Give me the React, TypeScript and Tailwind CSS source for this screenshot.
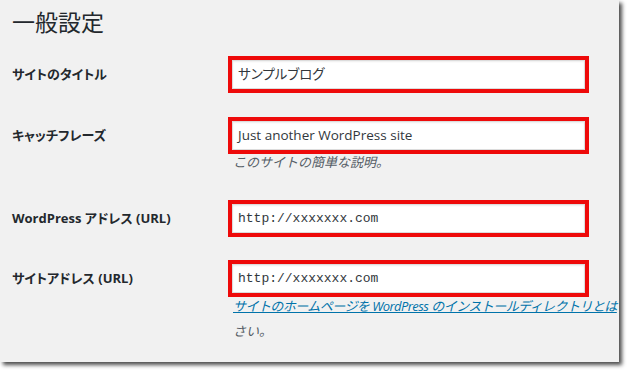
const jp = "font-['Open_Sans','Noto_Sans_CJK_JP',sans-serif] [font-feature-settings:'palt']";
const note = "font-['Open_Sans','Noto_Sans_CJK_JP',sans-serif] [font-feature-settings:normal] text-[13px] italic";

function Field({ value, mono }: { value: string; mono?: boolean }) {
  return (
    <div className="w-[361px] h-[37px] border-4 border-[#ee0a0a]">
      <div
        className={
          "h-full bg-white border border-[#dcdcdc] shadow-[inset_0_1px_2px_rgba(0,0,0,0.07)] pl-[5px] flex items-center text-[#32373c] " +
          (mono ? "font-['Liberation_Mono',monospace] text-[13px]" : jp + " text-[13.5px]")
        }
      >
        {value}
      </div>
    </div>
  );
}

function Label({ children }: { children: React.ReactNode }) {
  return (
    <div className={"w-[216px] shrink-0 h-[37px] flex items-center text-[13px] font-bold text-[#23282d] " + jp}>
      {children}
    </div>
  );
}

export default function App() {
  return (
    <div className="w-[627px] h-[370px] bg-white">
      <div className={"w-[619px] h-[362px] bg-[#f1f1f1] shadow-[3px_3px_4px_rgba(0,0,0,0.7)] overflow-hidden pl-[12px] pt-[8px] " + jp}>
        <h1 className="text-[23px] leading-[29px] font-normal text-[#23282d]">一般設定</h1>

        <div className="mt-[19px] flex">
          <Label>サイトのタイトル</Label>
          <Field value="サンプルブログ" />
        </div>

        <div className="mt-[24px] flex">
          <Label>キャッチフレーズ</Label>
          <div>
            <Field value="Just another WordPress site" />
            <p className={"pl-[5px] leading-[17px] text-[#555d66] " + note}>このサイトの簡単な説明。</p>
          </div>
        </div>

        <div className="mt-[29px] flex">
          <Label>WordPress アドレス (URL)</Label>
          <Field value="http://xxxxxxx.com" mono />
        </div>

        <div className="mt-[23px] flex">
          <Label>サイトアドレス (URL)</Label>
          <div className="w-[391px]">
            <Field value="http://xxxxxxx.com" mono />
            <p className={"pl-[5px] leading-[18px] whitespace-nowrap tracking-[-0.55px] " + note}>
              <a className="text-[#0073aa] underline">
                サイトのホームページを WordPress のインストールディレクトリとは
              </a>
            </p>
            <p className={"mt-[7px] pl-[5px] leading-[18px] text-[#555d66] " + note}>さい。</p>
          </div>
        </div>
      </div>
    </div>
  );
}
